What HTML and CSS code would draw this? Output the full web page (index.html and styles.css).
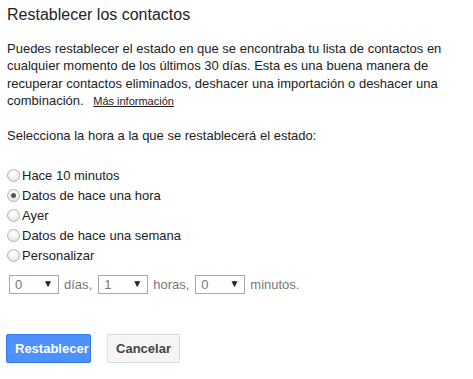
FILE: index.html
```html
<!DOCTYPE html>
<html lang="es">
<head>
<meta charset="utf-8">
<title>Restablecer los contactos</title>
<link rel="stylesheet" href="styles.css">
</head>
<body>
<div class="dialog">
  <h1 class="title">Restablecer los contactos</h1>
  <p class="intro">Puedes restablecer el estado en que se encontraba tu lista de contactos en cualquier momento de los últimos 30 días. Esta es una buena manera de recuperar contactos eliminados, deshacer una importación o deshacer una combinación. <a class="more" href="#">Más información</a></p>
  <p class="prompt">Selecciona la hora a la que se restablecerá el estado:</p>
  <div class="options">
    <label class="option"><input class="radio" type="radio" name="t"><span>Hace 10 minutos</span></label>
    <label class="option"><input class="radio" type="radio" name="t" checked><span>Datos de hace una hora</span></label>
    <label class="option"><input class="radio" type="radio" name="t"><span>Ayer</span></label>
    <label class="option"><input class="radio" type="radio" name="t"><span>Datos de hace una semana</span></label>
    <label class="option"><input class="radio" type="radio" name="t"><span>Personalizar</span></label>
  </div>
  <div class="custom">
    <span class="sel"><select><option>0</option></select><span class="arrow">▼</span></span>
    <span class="unit">días,</span>
    <span class="sel"><select><option>1</option></select><span class="arrow">▼</span></span>
    <span class="unit">horas,</span>
    <span class="sel"><select><option>0</option></select><span class="arrow">▼</span></span>
    <span class="unit">minutos.</span>
  </div>
  <div class="actions">
    <button class="btn primary" type="button">Restablecer</button>
    <button class="btn secondary" type="button">Cancelar</button>
  </div>
</div>
</body>
</html>
```
FILE: styles.css
```css
html, body {
  margin: 0;
  padding: 0;
  background: #fff;
}
body {
  font-family: Arial, "Liberation Sans", sans-serif;
  font-size: 13px;
  color: #222;
}
.dialog {
  padding: 5px 7px 0 7px;
}
.title {
  font-size: 16px;
  font-weight: normal;
  line-height: 20px;
  margin: 0;
  color: #222;
}
.intro {
  margin: 15px 0 0 0;
  line-height: 17.3px;
  width: 450px;
}
.more {
  display: inline-block;
  font-size: 11px;
  line-height: 13px;
  color: #222;
  margin-left: 6px;
}
.prompt {
  margin: 18px 0 0 0;
  line-height: 17px;
}
.options {
  margin-top: 21px;
  display: flex;
  flex-direction: column;
}
.option {
  display: flex;
  align-items: center;
  height: 20px;
}
.radio {
  appearance: none;
  -webkit-appearance: none;
  width: 13px;
  height: 13px;
  margin: 0 2px 0 0;
  border-radius: 50%;
  border: 1px solid #b4b4b4;
  background: radial-gradient(circle at 50% 35%, #ffffff 0%, #f2f2f2 45%, #dcdcdc 100%);
  box-sizing: border-box;
  position: relative;
}
.radio:checked::after {
  content: "";
  position: absolute;
  left: 3px;
  top: 3px;
  width: 5px;
  height: 5px;
  border-radius: 50%;
  background: #555;
}
.custom {
  display: flex;
  align-items: center;
  margin-top: 10px;
  padding-left: 2px;
  color: #777;
}
.sel {
  position: relative;
  display: inline-block;
}
.sel select {
  appearance: none;
  -webkit-appearance: none;
  width: 50px;
  height: 19px;
  border: 1px solid #a9a9a9;
  border-radius: 0;
  background: #fff;
  font-family: Arial, "Liberation Sans", sans-serif;
  font-size: 13px;
  color: #777;
  padding: 0 0 0 5px;
  margin: 0;
  display: block;
}
.arrow {
  position: absolute;
  right: 6px;
  top: 3px;
  font-size: 10px;
  color: #222;
  pointer-events: none;
}
.unit {
  margin: 0 6px 0 5px;
}
.actions {
  display: flex;
  gap: 16px;
  margin-top: 40px;
  margin-left: -1px;
}
.btn {
  height: 29px;
  font-family: Arial, "Liberation Sans", sans-serif;
  font-size: 13px;
  font-weight: bold;
  border-radius: 2px;
  padding: 0 8px;
  margin: 0;
}
.primary {
  width: 85px;
  background: #4d90fe;
  border: 1px solid #3079ed;
  color: #fff;
}
.secondary {
  width: 73px;
  background: #f5f5f5;
  border: 1px solid #dcdcdc;
  color: #444;
}
```
